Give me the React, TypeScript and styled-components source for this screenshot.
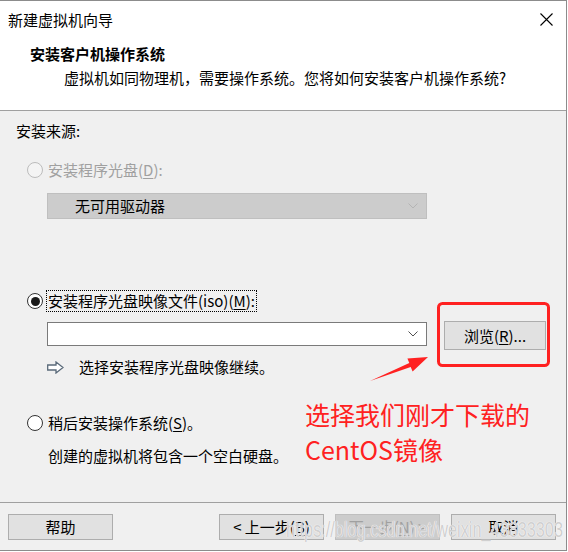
import React from "react";
import styled, { createGlobalStyle } from "styled-components";

const GlobalStyle = createGlobalStyle`
  html, body { margin: 0; padding: 0; background: #ffffff; }
  body { font-family: "Noto Sans CJK SC", "Microsoft YaHei", sans-serif; }
  * { box-sizing: border-box; }
`;

const Page = styled.div`
  position: relative;
  width: 568px;
  height: 552px;
  background: #ffffff;
  overflow: hidden;
`;

const Window = styled.div`
  width: 567px;
  height: 551px;
  border-top: 1px solid #8c8c8c;
  border-right: 1px solid #8c8c8c;
  border-bottom: 1px solid #8c8c8c;
  display: flex;
  flex-direction: column;
  background: #f0f0f0;
  color: #000;
  font-size: 15px;
`;

const TitleBar = styled.div`
  height: 37px;
  flex-shrink: 0;
  background: #ffffff;
  display: flex;
  align-items: center;
  justify-content: space-between;
  padding: 0 13px 0 8px;
  font-size: 15px;
  line-height: 20px;
`;

const CloseButton = styled.div`
  width: 14px;
  height: 14px;
  display: flex;
  align-items: center;
  justify-content: center;
`;

const Header = styled.div`
  height: 73px;
  flex-shrink: 0;
  background: #ffffff;
  border-bottom: 1px solid #a0a0a0;
  padding: 5px 0 0 30px;
  display: flex;
  flex-direction: column;
`;

const HeaderTitle = styled.div`
  font-weight: bold;
  font-size: 15px;
  line-height: 22px;
`;

const HeaderSub = styled.div`
  margin-left: 34px;
  margin-top: 2px;
  font-size: 15px;
  line-height: 22px;
`;

const Body = styled.div`
  flex: 1;
  display: flex;
  flex-direction: column;
  padding: 0 16px;
`;

const TextLine = styled.div<{ $mt: number; $indent?: number; $color?: string }>`
  margin-top: ${(p) => p.$mt}px;
  margin-left: ${(p) => p.$indent ?? 0}px;
  height: 20px;
  line-height: 20px;
  white-space: nowrap;
  color: ${(p) => p.$color ?? "#000"};
`;

const RadioRow = styled.div<{ $mt: number; $disabled?: boolean }>`
  margin-top: ${(p) => p.$mt}px;
  margin-left: 11px;
  height: 22px;
  display: flex;
  align-items: center;
  gap: 3px;
  color: ${(p) => (p.$disabled ? "#a0a0a0" : "#000")};
  white-space: nowrap;
`;

const RadioCircle = styled.span<{ $checked?: boolean; $disabled?: boolean }>`
  width: 16px;
  height: 16px;
  border-radius: 50%;
  border: 1px solid ${(p) => (p.$disabled ? "#bcbcbc" : "#333333")};
  background: ${(p) => (p.$disabled ? "#f4f4f4" : "#ffffff")};
  display: flex;
  align-items: center;
  justify-content: center;
  flex-shrink: 0;
  &::after {
    content: "";
    display: ${(p) => (p.$checked ? "block" : "none")};
    width: 9px;
    height: 9px;
    border-radius: 50%;
    background: #1a1a1a;
  }
`;

const RadioLabel = styled.span<{ $focused?: boolean }>`
  height: 22px;
  line-height: 20px;
  padding: 0 1px;
  border: 1px ${(p) => (p.$focused ? "dotted #000" : "solid transparent")};
`;

const Key = styled.span`
  text-decoration: underline;
  text-underline-offset: 2px;
`;

const Select = styled.div<{ $mt: number; $disabled?: boolean; $width: number }>`
  margin-top: ${(p) => p.$mt}px;
  width: ${(p) => p.$width}px;
  height: ${(p) => (p.$disabled ? 26 : 24)}px;
  background: ${(p) => (p.$disabled ? "#cccccc" : "#ffffff")};
  border: 1px solid ${(p) => (p.$disabled ? "#bfbfbf" : "#7a7a7a")};
  display: flex;
  align-items: center;
  justify-content: space-between;
  padding: 0 8px 0 27px;
  line-height: 20px;
  flex-shrink: 0;
`;

const SelectIndent = styled.div`
  margin-left: 31px;
`;

const IsoRow = styled.div`
  margin-top: 9px;
  margin-left: 31px;
  height: 29px;
  display: flex;
  align-items: flex-start;
  gap: 17px;
`;

const IsoSelect = styled(Select)`
  margin-top: 1px;
`;

const Button = styled.div<{ $disabled?: boolean; $w?: number; $h?: number }>`
  width: ${(p) => p.$w ?? 105}px;
  height: ${(p) => p.$h ?? 26}px;
  background: ${(p) => (p.$disabled ? "#cccccc" : "#e1e1e1")};
  border: 1px solid ${(p) => (p.$disabled ? "#bfbfbf" : "#adadad")};
  color: ${(p) => (p.$disabled ? "#a0a0a0" : "#000")};
  display: flex;
  align-items: center;
  justify-content: center;
  font-size: 15px;
  line-height: 20px;
  white-space: nowrap;
  flex-shrink: 0;
`;

const HintRow = styled.div`
  margin-top: 7px;
  margin-left: 31px;
  height: 20px;
  display: flex;
  align-items: center;
  gap: 15px;
  line-height: 20px;
`;

const Footer = styled.div`
  height: 48px;
  flex-shrink: 0;
  border-top: 1px solid #a0a0a0;
  padding: 11px 10px 0 8px;
  display: flex;
  align-items: flex-start;
`;

const FooterRight = styled.div`
  margin-left: auto;
  display: flex;
  gap: 11px;
`;

const AnnotationLayer = styled.svg`
  position: absolute;
  left: 0;
  top: 0;
  pointer-events: none;
`;

const AnnotationText = styled.div`
  position: absolute;
  left: 305px;
  top: 397px;
  font-size: 25px;
  line-height: 35px;
  color: #ff2121;
  white-space: nowrap;
`;

const Watermark = styled.div`
  position: absolute;
  left: 286px;
  top: 517px;
  font-family: "Liberation Sans", Arial, sans-serif;
  font-size: 22px;
  line-height: 26px;
  color: rgba(195, 195, 195, 0.8);
  text-shadow: 0 0 1px #ffffff, 0 0 1px #ffffff;
  transform: scaleX(0.74);
  transform-origin: left center;
  white-space: nowrap;
  pointer-events: none;
`;

const Chevron = ({ color }: { color: string }) => (
  <svg width="10" height="6" viewBox="0 0 10 6">
    <path d="M0.5 0.5 L5 5 L9.5 0.5" fill="none" stroke={color} strokeWidth="1" />
  </svg>
);

const HollowArrow = () => (
  <svg width="17" height="13" viewBox="0 0 17 13">
    <path
      d="M0.7 4 H9 V1 L16 6.5 L9 12 V9 H0.7 Z"
      fill="#ffffff"
      stroke="#5a6a7a"
      strokeWidth="1.3"
      strokeLinejoin="miter"
    />
  </svg>
);

export default function App() {
  return (
    <>
      <GlobalStyle />
      <Page>
        <Window>
          <TitleBar>
            <span>新建虚拟机向导</span>
            <CloseButton>
              <svg width="13" height="13" viewBox="0 0 13 13">
                <path d="M0.5 0.5 L12.5 12.5 M12.5 0.5 L0.5 12.5" stroke="#000" strokeWidth="1.1" />
              </svg>
            </CloseButton>
          </TitleBar>
          <Header>
            <HeaderTitle>安装客户机操作系统</HeaderTitle>
            <HeaderSub>虚拟机如同物理机，需要操作系统。您将如何安装客户机操作系统?</HeaderSub>
          </Header>
          <Body>
            <TextLine $mt={10}>安装来源:</TextLine>

            <RadioRow $mt={18} $disabled>
              <RadioCircle $disabled />
              <RadioLabel>
                安装程序光盘(<Key>D</Key>):
              </RadioLabel>
            </RadioRow>
            <SelectIndent>
              <Select $mt={12} $disabled $width={380}>
                <span>无可用驱动器</span>
                <Chevron color="#b4b4b4" />
              </Select>
            </SelectIndent>

            <RadioRow $mt={71}>
              <RadioCircle $checked />
              <RadioLabel $focused>
                安装程序光盘映像文件(iso)(<Key>M</Key>):
              </RadioLabel>
            </RadioRow>
            <IsoRow>
              <IsoSelect $mt={1} $width={380}>
                <span />
                <Chevron color="#505050" />
              </IsoSelect>
              <Button $w={102} $h={29}>
                浏览(<Key>R</Key>)...
              </Button>
            </IsoRow>
            <HintRow>
              <HollowArrow />
              <span>选择安装程序光盘映像继续。</span>
            </HintRow>

            <RadioRow $mt={35}>
              <RadioCircle />
              <RadioLabel>
                稍后安装操作系统(<Key>S</Key>)。
              </RadioLabel>
            </RadioRow>
            <TextLine $mt={12} $indent={32}>
              创建的虚拟机将包含一个空白硬盘。
            </TextLine>
          </Body>
          <Footer>
            <Button>帮助</Button>
            <FooterRight>
              <Button>
                &lt; 上一步(<Key>B</Key>)
              </Button>
              <Button $disabled>
                下一步(<Key>N</Key>) &gt;
              </Button>
              <Button>取消</Button>
            </FooterRight>
          </Footer>
        </Window>

        <AnnotationLayer width="568" height="552" viewBox="0 0 568 552">
          <rect x="438.5" y="303.5" width="110" height="62" rx="4" ry="4" fill="none" stroke="#ff2121" strokeWidth="3" />
          <polygon
            points="370,381 409.3,363.1 407.4,358.5 428,357 412.6,371.5 410.7,366.9"
            fill="#ff2121"
          />
        </AnnotationLayer>
        <AnnotationText>
          选择我们刚才下载的
          <br />
          CentOS镜像
        </AnnotationText>
        <Watermark>https://blog.csdn.net/weixin_43833303</Watermark>
      </Page>
    </>
  );
}
